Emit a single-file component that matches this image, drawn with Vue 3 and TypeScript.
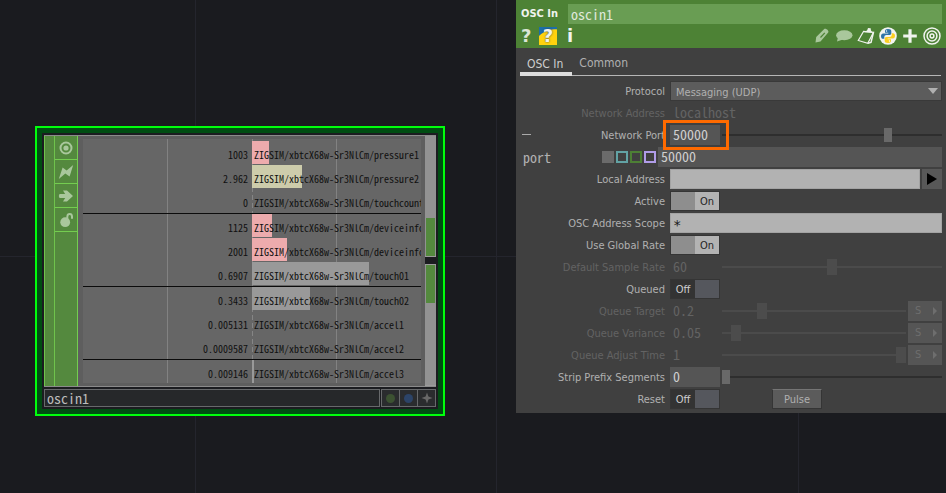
<script setup lang="ts">
import { ref } from 'vue'

interface Channel {
  name: string
  value: string
  span: number
  tone: string
}

interface NumberParam {
  id: string
  label: string
  value: string
  position: number
}

const source = 'ZIGSIM/xbtcX68w-Sr3NlCm/'

// span is the bar length as a percentage of the half of the graph right of zero
const groups: Channel[][] = [
  [
    { name: 'pressure1', value: '1003', span: 10, tone: 'pink' },
    { name: 'pressure2', value: '2.962', span: 29.5, tone: 'sand' },
    { name: 'touchcount', value: '0', span: 0, tone: 'grey' },
  ],
  [
    { name: 'deviceinfo1', value: '1125', span: 11.2, tone: 'pink' },
    { name: 'deviceinfo2', value: '2001', span: 20, tone: 'pink' },
    { name: 'touch01', value: '0.6907', span: 69, tone: 'grey' },
  ],
  [
    { name: 'touch02', value: '0.3433', span: 34.3, tone: 'grey' },
    { name: 'accel1', value: '0.005131', span: 0, tone: 'grey' },
    { name: 'accel2', value: '0.0009587', span: 0, tone: 'grey' },
  ],
  [{ name: 'accel3', value: '0.009146', span: 1, tone: 'grey' }],
]

const queueParams: NumberParam[] = [
  { id: 'target', label: 'Queue Target', value: '0.2', position: 20 },
  { id: 'variance', label: 'Queue Variance', value: '0.05', position: 5 },
  { id: 'adjust', label: 'Queue Adjust Time', value: '1', position: 100 },
]

const nodeName = ref('oscin1')
const port = ref('50000')
const active = ref(true)
const globalRate = ref(true)
const queued = ref(false)
const reset = ref(false)
</script>

<template>
  <main class="network">
    <section class="node" aria-label="OSC In node">
      <div class="node-frame">
        <div class="node-body">
          <div class="handle"></div>
          <div class="flags">
            <button class="flag" type="button" aria-label="Viewer active">
              <svg viewBox="0 0 16 16"><circle cx="8" cy="8" r="5.5" fill="none" stroke="currentColor" stroke-width="2" /><circle cx="8" cy="8" r="2.6" fill="currentColor" /></svg>
            </button>
            <button class="flag" type="button" aria-label="Clone immune">
              <svg viewBox="0 0 16 16"><path d="M.8 15 4.6 3.600 8.600 6.600 15.200 1 11.600 12.600 7.300 9.400Z" fill="currentColor" /></svg>
            </button>
            <button class="flag" type="button" aria-label="Bypass">
              <svg viewBox="0 0 16 16"><path d="M1.500 6h5.700L5 2.600h4L15 8l-6 5.400H5L7.200 10H1.500L.8 8Z" fill="currentColor" /></svg>
            </button>
            <button class="flag" type="button" aria-label="Lock">
              <svg viewBox="0 0 16 16"><circle cx="7.200" cy="10.200" r="4.900" fill="currentColor" /><path d="M9.200 7 9.400 4.300C9.600 1.400 13.800 1.200 14 4.500v2.300" fill="none" stroke="currentColor" stroke-width="2" /></svg>
            </button>
          </div>
          <div class="viewer">
            <div class="graph">
              <div v-for="(group, g) in groups" :key="g" class="group">
                <div v-for="channel in group" :key="channel.name" class="channel">
                  <span class="reading">{{ channel.value }}</span>
                  <span class="plot">
                    <span class="bar" :class="channel.tone" :style="{ width: channel.span + '%' }"></span>
                    <span class="channel-name">{{ source }}{{ channel.name }}</span>
                  </span>
                </div>
              </div>
            </div>
          </div>
          <div class="connectors">
            <div class="connector upper"><i></i></div>
            <div class="connector lower"><i></i></div>
          </div>
        </div>
        <div class="node-footer">
          <input v-model="nodeName" class="node-name" aria-label="Node name" />
          <div class="node-flags">
            <button type="button" aria-label="Display"><span class="dot green"></span></button>
            <button type="button" aria-label="Render"><span class="dot blue"></span></button>
            <button type="button" aria-label="Activate viewer">
              <svg viewBox="0 0 12 12"><path d="M6 .5 7.400 4.600 11.500 6 7.400 7.400 6 11.500 4.600 7.400.5 6 4.600 4.600Z" fill="#686868" /></svg>
            </button>
          </div>
        </div>
      </div>
    </section>

    <section class="panel" aria-label="Parameters">
      <header class="panel-head">
        <div class="title">
          <label for="op-name">OSC In</label>
          <input id="op-name" v-model="nodeName" />
        </div>
        <div class="tools">
          <button type="button" class="glyph pale">?</button>
          <button type="button" class="glyph pyhelp">?</button>
          <button type="button" class="glyph">i</button>
          <span class="spacer"></span>
          <button type="button" class="tool dim" aria-label="Edit">
            <svg viewBox="0 0 18 18"><path d="M2.500 15.500 3.200 10 11 2.200c1-.9 2.800 0 3.800 1 .8.900.9 1.800.2 2.600L7.500 14.500Z" fill="currentColor" /><path d="m7.500 10.500 4.300-4.700" stroke="#4d8235" stroke-width="1.200" /></svg>
          </button>
          <button type="button" class="tool dim" aria-label="Comment">
            <svg viewBox="0 0 18 18"><ellipse cx="9.300" cy="8.200" rx="8.200" ry="5" fill="currentColor" /><path d="m3 10-1 4.500 6-2Z" fill="currentColor" /></svg>
          </button>
          <button type="button" class="tool" aria-label="Copy parameters">
            <svg viewBox="0 0 18 18"><path d="M6.500 4.500 1.300 13.500 10.800 16.300 16.500 5.300Z" fill="none" stroke="currentColor" stroke-width="1.200" /><path d="M16.500 5.300 14 15.500 10.800 16.300" fill="none" stroke="currentColor" stroke-width="1.500" /><path d="m7.500 5.300 2.700-2 .8-2.300 2.700.2.200 2 1.600 2.600Z" fill="currentColor" /></svg>
          </button>
          <button type="button" class="tool" aria-label="Python">
            <svg viewBox="0 0 18 18"><circle cx="9" cy="9" r="8.800" fill="#f2f4f0" /><path d="M9 2C6.300 2 6 3 6 4.200v1.500h3.300v.7H4.200C2.800 6.400 2 7.600 2 9.200s.8 2.600 2 2.600h1.300V10c0-1.200.9-2 2-2h3.400c1 0 1.600-.8 1.600-1.700V4.200C12.300 2.800 11.400 2 9 2Z" fill="#2e74a8" /><path d="M9 16c2.700 0 3-1 3-2.200v-1.500H8.700v-.7h5.100c1.400 0 2.200-1.200 2.200-2.800S15.200 6.200 14 6.200h-1.300V8c0 1.200-.9 2-2 2H7.300c-1 0-1.600.8-1.600 1.700v2.100c0 1.400.9 2.200 3.300 2.200Z" fill="#fbcf22" /><circle cx="7.500" cy="4" r=".7" fill="#fff" /><circle cx="10.500" cy="14" r=".7" fill="#fff" /></svg>
          </button>
          <button type="button" class="tool" aria-label="Add">
            <svg viewBox="0 0 18 18"><path d="M9 2.200v13.600M2.200 9h13.600" stroke="currentColor" stroke-width="3.200" /></svg>
          </button>
          <button type="button" class="tool" aria-label="Target">
            <svg viewBox="0 0 18 18" fill="none" stroke="currentColor"><circle cx="9" cy="9" r="8" stroke-width="1.500" /><circle cx="9" cy="9" r="4.900" stroke-width="1.500" /><circle cx="9" cy="9" r="1.900" stroke-width="1.500" /></svg>
          </button>
        </div>
      </header>

      <nav class="tabs">
        <button type="button" class="tab current">OSC In</button>
        <button type="button" class="tab">Common</button>
      </nav>

      <div class="params">
        <div class="row">
          <label for="protocol">Protocol</label>
          <div class="menu">
            <select id="protocol"><option>Messaging (UDP)</option></select>
            <svg viewBox="0 0 10 6"><path d="M0 0h10L5 6Z" fill="#b0b0b0" /></svg>
          </div>
        </div>
        <div class="row off">
          <label for="address">Network Address</label>
          <input id="address" class="value plain wide" value="localhost" disabled />
        </div>
        <div class="row">
          <button type="button" class="collapse" aria-label="Collapse"></button>
          <label for="port">Network Port</label>
          <div class="highlighted">
            <input id="port" v-model="port" class="value" />
          </div>
          <input type="range" aria-label="Network Port slider" max="65535" value="50000" />
        </div>
        <div class="row expression">
          <label for="port-expr">port</label>
          <div class="modes">
            <button type="button" class="constant" aria-label="Constant"></button>
            <button type="button" class="expr" aria-label="Expression"></button>
            <button type="button" class="export" aria-label="Export"></button>
            <button type="button" class="bind" aria-label="Bind"></button>
          </div>
          <input id="port-expr" v-model="port" class="value wide" />
        </div>
        <div class="row">
          <label for="local">Local Address</label>
          <input id="local" class="value light wide" />
          <button type="button" class="arrow" aria-label="Choose address">
            <svg viewBox="0 0 12 12"><path d="M1 0 11 6 1 12Z" fill="#000" /></svg>
          </button>
        </div>
        <div class="row">
          <label for="active">Active</label>
          <span class="toggle" :class="{ on: active }">
            <input id="active" v-model="active" type="checkbox" />
            <span>{{ active ? 'On' : 'Off' }}</span>
          </span>
        </div>
        <div class="row">
          <label for="scope">OSC Address Scope</label>
          <input id="scope" class="value light wide" value="*" />
        </div>
        <div class="row">
          <label for="rate">Use Global Rate</label>
          <span class="toggle" :class="{ on: globalRate }">
            <input id="rate" v-model="globalRate" type="checkbox" />
            <span>{{ globalRate ? 'On' : 'Off' }}</span>
          </span>
        </div>
        <div class="row off">
          <label for="sample">Default Sample Rate</label>
          <input id="sample" class="value plain" value="60" disabled />
          <input type="range" aria-label="Default Sample Rate slider" max="120" value="60" disabled />
        </div>
        <div class="row">
          <label for="queued">Queued</label>
          <span class="toggle" :class="{ on: queued }">
            <input id="queued" v-model="queued" type="checkbox" />
            <span>{{ queued ? 'On' : 'Off' }}</span>
          </span>
        </div>
        <div v-for="param in queueParams" :key="param.id" class="row off">
          <label :for="param.id">{{ param.label }}</label>
          <input :id="param.id" class="value plain" :value="param.value" disabled />
          <input type="range" :aria-label="param.label + ' slider'" max="100" :value="param.position" disabled />
          <button type="button" class="unit" disabled>
            S
            <svg viewBox="0 0 4 8"><path d="M0 0 4 4 0 8Z" fill="currentColor" /></svg>
          </button>
        </div>
        <div class="row">
          <label for="strip">Strip Prefix Segments</label>
          <input id="strip" class="value" value="0" />
          <input type="range" aria-label="Strip Prefix Segments slider" max="10" value="0" />
        </div>
        <div class="row">
          <label for="reset">Reset</label>
          <span class="toggle" :class="{ on: reset }">
            <input id="reset" v-model="reset" type="checkbox" />
            <span>{{ reset ? 'On' : 'Off' }}</span>
          </span>
          <button type="button" class="pulse">Pulse</button>
        </div>
      </div>
    </section>
  </main>
</template>

<style>
body {
  background: #1a1b1f;
}
</style>

<style scoped>
* {
  box-sizing: border-box;
}

.network {
  --mono: "Noto Sans Mono CJK JP", "DejaVu Sans Mono", monospace;
  --sans: "DejaVu Sans Condensed", "Noto Sans", sans-serif;
  display: grid;
  grid-template-columns: 410fr 430fr;
  column-gap: 71px;
  align-items: start;
  min-height: 100vh;
  padding-left: 35px;
  font: 11px/20px var(--sans);
  background:
    linear-gradient(#24252d, #24252d) 195px 0 / 1px 100% no-repeat,
    linear-gradient(#24252d, #24252d) 496px 0 / 1px 100% no-repeat,
    linear-gradient(#24252d, #24252d) 798px 0 / 1px 100% no-repeat,
    linear-gradient(#24252d, #24252d) 0 256px / 100% 1px no-repeat,
    #1a1b1f;
}

button,
input,
select {
  margin: 0;
  padding: 0;
  border: 0;
  border-radius: 0;
  background: none;
  color: inherit;
  font: inherit;
  min-width: 0;
}

svg {
  display: block;
}

/* node */
.node {
  margin-top: 126px;
  padding: 5px;
  border: 2px solid #00ff0c;
  background: #004d12;
}

.node-frame {
  display: flex;
  flex-direction: column;
  gap: 2px;
  padding: 2px;
  background: #1b1c20;
}

.node-body {
  display: flex;
  height: 252px;
  border: 1px solid #8b8b8b;
  border-left: 0;
  border-right: 0;
}

.handle {
  width: 11px;
  border: 1px solid #6fc34c;
  border-width: 0 1px;
  background: #54893e;
}

.flags {
  width: 23px;
  border-right: 1px solid #74cd50;
  background: #54893e;
}

.flag {
  display: grid;
  place-items: center;
  width: 100%;
  height: 24px;
  border-bottom: 1px solid #74cd50;
  color: #a9c79c;
}

.flag svg {
  width: 16px;
  height: 16px;
}

.viewer {
  flex: 1;
  min-width: 0;
  padding: 3px 4px 3px 5px;
  background: #5e5e5e;
}

.graph {
  height: 100%;
  padding-top: 2px;
  overflow: hidden;
  background:
    linear-gradient(#828282, #828282) 25% 0 / 1px 100% no-repeat,
    linear-gradient(#828282, #828282) 75% 0 / 1px 100% no-repeat,
    repeating-linear-gradient(#858585 0 5px, #666 5px 8px) 50% 0 / 1px 100% no-repeat,
    #666;
  color: #101010;
  font-family: var(--mono);
  font-size: 10px;
  line-height: 24px;
}

.group + .group {
  border-top: 1px solid #0b0b0b;
}

.channel {
  display: grid;
  grid-template-columns: 1fr 1fr;
  height: 24px;
}

.reading {
  padding: 2px 4px 0 0;
  text-align: right;
}

.plot {
  display: grid;
  min-width: 0;
}

.bar,
.channel-name {
  grid-area: 1 / 1;
}

.bar {
  height: 23px;
}

.pink {
  background: #edabad;
}

.sand {
  background: #cdccab;
}

.grey {
  background: #999;
}

.channel-name {
  padding: 2px 0 0 2px;
  white-space: nowrap;
}

.connectors {
  display: flex;
  flex-direction: column;
  gap: 7px;
  width: 11px;
  background: #1b1c20;
}

.connector {
  flex: 1;
  padding: 0 1px;
  border-bottom: 1px solid #9c9c9c;
  background: #929292;
  display: flex;
}

.connector i {
  flex: 1;
  height: 38px;
  background: #54893e;
}

.upper {
  align-items: flex-end;
}

.lower {
  border-top: 1px solid #9c9c9c;
}

.node-footer {
  display: flex;
  gap: 1px;
  height: 18px;
}

.node-name {
  flex: 1;
  padding: 0 2px;
  border: 1px solid #67696b;
  background: #26282a;
  color: #bcbcbc;
  font: 14px/16px var(--mono);
}

.node-flags {
  display: flex;
  gap: 1px;
  padding: 1px;
  background: #67696b;
}

.node-flags button {
  display: grid;
  place-items: center;
  width: 17px;
  background: #2a2c2e;
}

.node-flags svg {
  width: 12px;
  height: 12px;
}

.dot {
  width: 9px;
  height: 9px;
  border-radius: 50%;
}

.dot.green {
  background: #3c5232;
}

.dot.blue {
  background: #2c4468;
}

/* parameter panel */
.panel {
  padding-bottom: 3px;
  background: #404040;
  color: #b0b0b0;
}

.panel-head {
  height: 48px;
  padding: 4px 4px 0 5px;
  background: #4d8235;
  color: #f0f3ee;
}

.title {
  display: flex;
  align-items: center;
  height: 20px;
}

.title label {
  width: 47px;
  font-weight: bold;
}

.title input {
  flex: 1;
  height: 20px;
  padding: 0 3px;
  background: #699d53;
  color: #dfe8da;
  font: 14px/20px var(--mono);
}

.tools {
  display: flex;
  align-items: center;
  gap: 4px;
  height: 24px;
  padding-right: 1px;
}

.glyph {
  width: 18px;
  height: 18px;
  font: bold 18px/18px "DejaVu Sans", sans-serif;
}

.glyph.pale {
  width: 10px;
  margin-right: 4px;
  color: #dbe6d6;
}

.glyph.pyhelp {
  background: radial-gradient(circle at 90% 140%, #ffd20d 75%, #1c6ea8 78%);
  text-shadow: 0 0 2px #23415a;
}

.spacer {
  flex: 1;
}

.tool,
.tool svg {
  width: 18px;
  height: 18px;
}

.tool.dim {
  color: #a9c79c;
}

.tabs {
  display: flex;
  height: 28px;
  margin: 0 5px 4px 4px;
  border-bottom: 1px solid #b6b6b6;
}

.tab {
  height: 28px;
  padding: 2px 7px 0;
  font-size: 12px;
}

.tab.current {
  border-bottom: 4px solid #dedede;
  padding: 6px 9px 0 7px;
  color: #cfcfcf;
}

.params {
  padding-right: 4px;
}

.row {
  display: flex;
  align-items: center;
  position: relative;
  height: 22px;
}

.row > label {
  width: 149px;
  margin-right: 5px;
  padding-top: 1px;
  text-align: right;
}

.off,
.off .value {
  color: #636363;
}

.value {
  width: 50px;
  height: 20px;
  padding: 0 3px 2px;
  background: #555;
  color: #d0d0d0;
  font: 14px/18px var(--mono);
}

.value.wide {
  flex: 1;
}

.value.plain {
  background: none;
}

.value.light {
  padding: 4px 2px 0;
  border: 1px solid #a3a3a3;
  background: #b2b2b2;
  color: #1c1c1c;
  font-family: "DejaVu Sans Mono", monospace;
}

.menu {
  position: relative;
  flex: 1;
}

.menu select {
  appearance: none;
  display: block;
  width: 100%;
  height: 20px;
  padding: 1px 5px 0;
  border: 1px solid #393939;
  background: #5c5c5c;
  color: #b0b0b0;
}

.menu svg {
  position: absolute;
  top: 7px;
  right: 4px;
  width: 10px;
  height: 6px;
}

.collapse {
  position: absolute;
  left: 6px;
  top: 10px;
  width: 9px;
  height: 1px;
  background: #aaa;
}

.highlighted {
  position: relative;
  display: flex;
}

.highlighted::after {
  content: "";
  position: absolute;
  inset: -5px -9px -5px -7px;
  border: 3px solid #ff6a00;
  z-index: 1;
  pointer-events: none;
}

input[type="range"] {
  appearance: none;
  flex: 1;
  height: 16px;
  margin-left: 2px;
  background: linear-gradient(#2e2e2e, #2e2e2e) 0 50% / 100% 2px no-repeat;
}

input[type="range"]::-webkit-slider-thumb {
  appearance: none;
  width: 8px;
  height: 14px;
  background: #696969;
}

.off input[type="range"] {
  background-image: linear-gradient(#4b4b4b, #4b4b4b);
}

.off input[type="range"]::-webkit-slider-thumb {
  width: 10px;
  height: 16px;
  background: #4c4c4c;
}

.expression > label {
  width: 79px;
  margin: 0 0 0 7px;
  padding: 0;
  text-align: left;
  font: 14px/20px var(--mono);
}

.modes {
  display: flex;
  gap: 2px;
  margin-right: 2px;
}

.modes button {
  width: 12px;
  height: 12px;
  border: 2px solid #6b6b6b;
}

.modes .constant {
  background: #6b6b6b;
}

.modes .expr {
  border-color: #62a2a4;
}

.modes .export {
  border-color: #4d7f35;
}

.modes .bind {
  border-color: #b09ce8;
}

.arrow {
  display: grid;
  place-items: center;
  width: 20px;
  height: 20px;
  margin-left: 2px;
  background: #585858;
}

.arrow svg {
  width: 12px;
  height: 12px;
}

.toggle {
  display: flex;
  position: relative;
  width: 50px;
  height: 20px;
  border: 1px solid #353535;
  background: linear-gradient(90deg, #333 50%, #55575d 50%);
  color: #cfcfcf;
}

.toggle.on {
  justify-content: flex-end;
  background: linear-gradient(90deg, #8e8e8e 50%, #b3b3b3 50%);
  color: #252525;
}

.toggle span {
  width: 24px;
  text-align: center;
}

.toggle input {
  appearance: none;
  position: absolute;
  inset: 0;
}

.unit {
  display: flex;
  align-items: center;
  justify-content: space-between;
  width: 34px;
  height: 20px;
  margin-left: 2px;
  padding: 0 5px 0 7px;
  background: #555;
  color: #6e6e6e;
}

.unit svg {
  width: 4px;
  height: 8px;
}

.pulse {
  width: 50px;
  height: 20px;
  margin-left: 52px;
  border: 1px solid #353535;
  border-top-color: #757575;
  background: #5b5b5b;
}
</style>
